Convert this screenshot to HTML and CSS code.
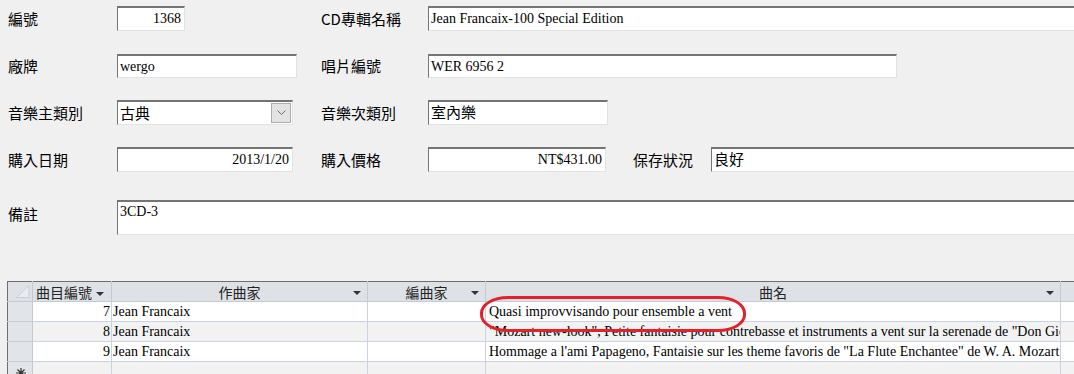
FILE: index.html
```html
<!DOCTYPE html>
<html lang="zh-Hant">
<head>
  <meta charset="UTF-8">
  <title>CD 專輯資料</title>
  <link rel="stylesheet" href="styles.css">
</head>
<body>

  <div class="form">
    <div class="row r1">
      <span class="lbl">編號</span>
      <div class="fld num w-no">1368</div>
      <span class="lbl">CD專輯名稱</span>
      <div class="fld span-rest">Jean Francaix-100 Special Edition</div>
    </div>

    <div class="row r2">
      <span class="lbl">廠牌</span>
      <div class="fld w-brand">wergo</div>
      <span class="lbl">唱片編號</span>
      <div class="fld span-mid w-disc">WER 6956 2</div>
    </div>

    <div class="row r3">
      <span class="lbl">音樂主類別</span>
      <div class="fld combo w-cat">
        <span class="cjk">古典</span>
        <span class="drop">
          <svg width="9" height="6" viewBox="0 0 9 6"><path d="M0.5 0.5 L4.5 4.5 L8.5 0.5" fill="none" stroke="#6a6a6a" stroke-width="1"/></svg>
        </span>
      </div>
      <span class="lbl">音樂次類別</span>
      <div class="fld cjk w-sub">室內樂</div>
    </div>

    <div class="row r4">
      <span class="lbl">購入日期</span>
      <div class="fld num w-cat">2013/1/20</div>
      <span class="lbl">購入價格</span>
      <div class="fld num w-price">NT$431.00</div>
      <span class="lbl">保存狀況</span>
      <div class="fld cjk">良好</div>
    </div>

    <div class="row r5">
      <span class="lbl">備註</span>
      <div class="fld memo span-all">3CD-3</div>
    </div>
  </div>

  <div class="sheet">
    <table class="grid">
      <colgroup>
        <col class="c-sel">
        <col class="c-no">
        <col class="c-comp">
        <col class="c-arr">
        <col class="c-title">
        <col>
      </colgroup>
      <tr class="head">
        <th class="sel">
          <svg width="14" height="13" viewBox="0 0 14 13"><path d="M13 0.5 L13 12.5 L0.5 12.5 Z" fill="#e9ecf1" stroke="#c9cdd6" stroke-width="1"/></svg>
        </th>
        <th class="h-left">曲目編號<i class="arrow"></i></th>
        <th>作曲家<i class="arrow end"></i></th>
        <th>編曲家<i class="arrow end"></i></th>
        <th>曲名<i class="arrow end"></i></th>
        <th></th>
      </tr>
      <tr>
        <td class="sel"></td>
        <td class="num">7</td>
        <td>Jean Francaix</td>
        <td></td>
        <td class="title">Quasi improvvisando pour ensemble a vent</td>
        <td></td>
      </tr>
      <tr class="alt">
        <td class="sel"></td>
        <td class="num">8</td>
        <td>Jean Francaix</td>
        <td></td>
        <td class="title">"Mozart new-look", Petite fantaisie pour contrebasse et instruments a vent sur la serenade de "Don Giovanni"</td>
        <td></td>
      </tr>
      <tr>
        <td class="sel"></td>
        <td class="num">9</td>
        <td>Jean Francaix</td>
        <td></td>
        <td class="title">Hommage a l'ami Papageno, Fantaisie sur les theme favoris de "La Flute Enchantee" de W. A. Mozart</td>
        <td></td>
      </tr>
      <tr class="alt">
        <td class="sel new">
          <svg width="12" height="12" viewBox="0 0 12 12"><path d="M6 1 V11 M1 6 H11 M2.5 2.5 L9.5 9.5 M9.5 2.5 L2.5 9.5" stroke="#333" stroke-width="1.2"/></svg>
        </td>
        <td></td>
        <td></td>
        <td></td>
        <td></td>
        <td></td>
      </tr>
    </table>
    <div class="mark"></div>
  </div>

</body>
</html>
```

FILE: styles.css
```css
html, body {
  margin: 0;
  height: 374px;
  overflow: hidden;
}

body {
  background-color: #f0f0f0;
  color: #000;
  font-family: "Noto Sans CJK TC", "Noto Sans", sans-serif;
}

.form {
  padding-left: 8px;
  padding-top: 6px;
}

.row {
  display: grid;
  grid-template-columns: 109px 204px 107px 205px 78px 1fr;
  align-items: center;
  margin-right: -20px;
}

.r1 { height: 25px; }
.r2 { height: 24px; margin-top: 23px; }
.r3 { height: 25px; margin-top: 22px; }
.r4 { height: 25px; margin-top: 22px; }
.r5 { height: 35px; margin-top: 28px; align-items: start; }

.lbl {
  font-size: 15px;
  line-height: 20px;
  white-space: nowrap;
}

.r5 .lbl {
  margin-top: 4px;
}

.fld {
  box-sizing: border-box;
  height: 100%;
  background-color: #fff;
  border-top: 2px solid #747474;
  border-left: 1px solid #747474;
  border-right: 1px solid #e2e2e2;
  border-bottom: 1px solid #e2e2e2;
  padding: 0 2px 0 2px;
  font-family: "Liberation Serif", "Times New Roman", serif;
  font-size: 14px;
  line-height: 21px;
  white-space: nowrap;
  overflow: hidden;
}

.fld.cjk, .fld .cjk {
  font-family: "Noto Sans CJK TC", sans-serif;
  font-size: 15px;
  line-height: 20px;
}

.fld.num {
  text-align: right;
  padding-right: 3px;
}

.w-no { width: 68px; }
.w-brand { width: 180px; }
.w-cat { width: 176px; }
.w-sub { width: 180px; }
.w-price { width: 178px; }
.w-disc { width: 469px; }

.span-rest { grid-column: 4 / 7; }
.span-mid { grid-column: 4 / 7; }
.span-all { grid-column: 2 / 7; }

.combo {
  display: flex;
  align-items: center;
  justify-content: space-between;
  padding-right: 1px;
}

.drop {
  box-sizing: border-box;
  width: 20px;
  height: 20px;
  background-color: #e3e3e3;
  border: 1px solid #acacac;
  display: flex;
  align-items: center;
  justify-content: center;
}

.memo {
  line-height: 20px;
}

/* datasheet */
.sheet {
  position: relative;
  margin-top: 46px;
  margin-left: 7px;
}

.grid {
  border-collapse: collapse;
  table-layout: fixed;
  width: 1080px;
  border-top: 1px solid #6e6e6e;
  border-left: 1px solid #6e6e6e;
  font-family: "Liberation Serif", "Times New Roman", serif;
  font-size: 14px;
}

.c-sel { width: 25px; }
.c-no { width: 79px; }
.c-comp { width: 256px; }
.c-arr { width: 118px; }
.c-title { width: 575px; }

.grid th {
  height: 19px;
  padding: 0;
  background-color: #dee1e6;
  border-right: 1px solid #c4c9d2;
  border-bottom: 1px solid #c4cbd8;
  font-family: "Noto Sans CJK TC", sans-serif;
  font-size: 14px;
  font-weight: normal;
  line-height: 18px;
  color: #222;
  text-align: center;
  position: relative;
  white-space: nowrap;
}

.grid th.h-left {
  text-align: left;
  padding-left: 3px;
}

.grid th.sel {
  text-align: right;
  vertical-align: bottom;
  padding-right: 2px;
}

.grid th.sel svg {
  display: block;
  margin: 0 0 3px auto;
}

.arrow {
  display: inline-block;
  width: 0;
  height: 0;
  border-left: 4px solid transparent;
  border-right: 4px solid transparent;
  border-top: 4px solid #333;
  margin-left: 4px;
  vertical-align: middle;
}

.arrow.end {
  position: absolute;
  right: 6px;
  top: 9px;
}

.grid td {
  height: 19px;
  padding: 0 1px;
  background-color: #fff;
  border-right: 1px solid #c9d3e3;
  border-bottom: 1px solid #c9d3e3;
  line-height: 19px;
  white-space: nowrap;
  overflow: hidden;
}

.grid tr.alt td {
  background-color: #f2f2f2;
}

.grid td.sel, .grid tr.alt td.sel {
  background-color: #e1e4e9;
  border-right: 1px solid #c4c9d2;
  border-bottom: 1px solid #c4cbd8;
}

.grid td.new svg {
  display: block;
  margin: 2px 0 0 6px;
}

.grid td.num {
  text-align: right;
  padding-right: 1px;
}

.grid td.title {
  padding-left: 3px;
}

.mark {
  position: absolute;
  left: 473px;
  top: 15px;
  width: 260px;
  height: 30px;
  border: 3px solid #e5202a;
  border-radius: 28px / 17px;
}
```
